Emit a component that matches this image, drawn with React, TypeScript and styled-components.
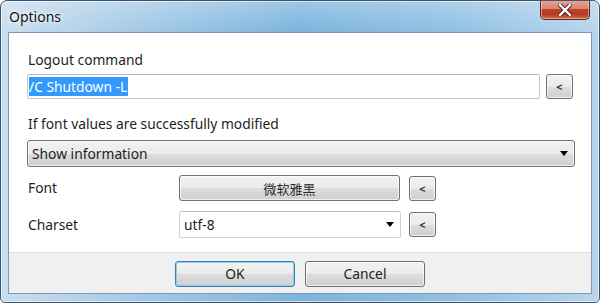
import React from "react";
import styled, { createGlobalStyle } from "styled-components";

const Global = createGlobalStyle`
  html, body { margin: 0; padding: 0; background: #ffffff; }
  #root { width: 600px; height: 303px; }
  * { box-sizing: border-box; }
`;

const Window = styled.div`
  width: 600px;
  height: 303px;
  display: flex;
  flex-direction: column;
  border: 1px solid #3e5570;
  border-radius: 7px 7px 5px 5px;
  background:
    linear-gradient(180deg, rgba(255,255,255,0.25) 0px, rgba(255,255,255,0) 30px),
    linear-gradient(90deg, #c8deef 0%, #a9cce8 20%, #7db4dd 50%, #90c0e3 75%, #b8d5ec 100%);
  box-shadow: inset 0 0 0 1px rgba(255,255,255,0.55);
  font-family: "Noto Sans", "Noto Sans CJK SC", sans-serif;
  color: #1e1e1e;
  overflow: hidden;
`;

const TitleBar = styled.div`
  height: 31px;
  display: flex;
  align-items: flex-start;
  justify-content: space-between;
  padding-left: 8px;
  padding-right: 9px;
`;

const Title = styled.div`
  font-size: 14px;
  line-height: 16px;
  margin-top: 8px;
  color: #111;
  text-shadow: 0 0 6px rgba(255,255,255,0.9), 0 0 3px rgba(255,255,255,0.9);
`;

const CloseButton = styled.div`
  width: 50px;
  height: 20px;
  margin-top: -1px;
  border: 1px solid #5a2a22;
  border-top: none;
  border-radius: 0 0 5px 5px;
  background: linear-gradient(180deg, #e8a899 0%, #d98370 45%, #c2412a 50%, #b83a24 75%, #d56a4f 100%);
  box-shadow: inset 0 0 0 1px rgba(255,255,255,0.4);
  display: flex;
  align-items: center;
  justify-content: center;
`;

const ClientArea = styled.div`
  flex: 1;
  margin: 0 7px 8px 7px;
  border: 1px solid #7f99b4;
  background: #ffffff;
  display: flex;
  flex-direction: column;
`;

const Body = styled.div`
  flex: 1;
  display: flex;
  flex-direction: column;
  padding: 19px 16px 0 18px;
  font-size: 13.8px;
`;

const Label = styled.div<{ $mt?: number }>`
  line-height: 16px;
  padding-left: 1px;
  margin-top: ${(p) => p.$mt ?? 0}px;
`;

const Row = styled.div<{ $mt: number }>`
  display: flex;
  align-items: center;
  margin-top: ${(p) => p.$mt}px;
`;

const RowLabel = styled.div`
  width: 152px;
  padding-left: 1px;
  line-height: 16px;
`;

const TextBox = styled.div<{ $w: number }>`
  width: ${(p) => p.$w}px;
  height: 25px;
  border: 1px solid #b9c8d6;
  border-top-color: #a7b9cb;
  border-radius: 2px;
  background: #fff;
  display: flex;
  align-items: center;
  padding-left: 1px;
`;

const Selected = styled.span`
  background: #3399ff;
  color: #ffffff;
  line-height: 19px;
  padding: 0 1px 0 0;
`;

const SmallButton = styled.div<{ $ml: number }>`
  width: 27px;
  height: 25px;
  margin-left: ${(p) => p.$ml}px;
  border: 1px solid #707070;
  border-radius: 3px;
  background: linear-gradient(180deg, #f2f2f2 0%, #ebebeb 50%, #dddddd 51%, #cfcfcf 100%);
  box-shadow: inset 0 0 0 1px rgba(255,255,255,0.7);
  display: flex;
  align-items: center;
  justify-content: center;
  font-size: 11px;
  font-weight: bold;
  color: #333;
`;

const DropList = styled.div`
  height: 27px;
  margin-top: 8px;
  border: 1px solid #707070;
  border-radius: 3px;
  background: linear-gradient(180deg, #f2f2f2 0%, #ebebeb 50%, #dddddd 51%, #cfcfcf 100%);
  box-shadow: inset 0 0 0 1px rgba(255,255,255,0.7);
  display: flex;
  align-items: center;
  justify-content: space-between;
  padding: 0 6px 0 4px;
`;

const Arrow = styled.span`
  width: 0;
  height: 0;
  border-left: 4px solid transparent;
  border-right: 4px solid transparent;
  border-top: 5px solid #000;
`;

const FontButton = styled.div`
  width: 221px;
  height: 26px;
  border: 1px solid #707070;
  border-radius: 3px;
  background: linear-gradient(180deg, #f2f2f2 0%, #ebebeb 50%, #dddddd 51%, #cfcfcf 100%);
  box-shadow: inset 0 0 0 1px rgba(255,255,255,0.7);
  display: flex;
  align-items: center;
  justify-content: center;
  font-size: 13px;
  color: #2a2a2a;
`;

const Combo = styled.div`
  width: 222px;
  height: 27px;
  border: 1px solid #c9d3dc;
  border-top-color: #b5c0cb;
  border-radius: 2px;
  background: #fff;
  display: flex;
  align-items: center;
  justify-content: space-between;
  padding: 0 6px 0 4px;
`;

const Footer = styled.div`
  height: 41px;
  background: #f0f0f0;
  border-top: 1px solid #dfdfdf;
  display: flex;
  align-items: center;
  justify-content: center;
  gap: 10px;
  padding-top: 1px;
`;

const DialogButton = styled.div<{ $default?: boolean }>`
  width: 120px;
  height: 26px;
  border: 1px solid ${(p) => (p.$default ? "#3c7fb1" : "#707070")};
  border-radius: 3px;
  background: linear-gradient(180deg, #f2f2f2 0%, #ebebeb 50%, #dddddd 51%, #cfcfcf 100%);
  box-shadow: inset 0 0 0 1px ${(p) => (p.$default ? "rgba(120,200,240,0.8)" : "rgba(255,255,255,0.7)")};
  display: flex;
  align-items: center;
  justify-content: center;
  font-size: 13.8px;
`;

export default function App() {
  return (
    <>
      <Global />
      <Window>
        <TitleBar>
          <Title>Options</Title>
          <CloseButton>
            <svg width="14" height="12" viewBox="0 0 14 12">
              <path
                d="M2 1 L12 11 M12 1 L2 11"
                stroke="#4a1d14"
                strokeWidth="4.2"
                strokeLinecap="square"
              />
              <path
                d="M2 1 L12 11 M12 1 L2 11"
                stroke="#ffffff"
                strokeWidth="2.4"
                strokeLinecap="square"
              />
            </svg>
          </CloseButton>
        </TitleBar>
        <ClientArea>
          <Body>
            <Label>Logout command</Label>
            <Row $mt={6}>
              <TextBox $w={513}>
                <Selected>/C Shutdown -L</Selected>
              </TextBox>
              <SmallButton $ml={6}>&lt;</SmallButton>
            </Row>
            <Label $mt={17}>If font values are successfully modified</Label>
            <DropList>
              <span>Show information</span>
              <Arrow />
            </DropList>
            <Row $mt={8}>
              <RowLabel>Font</RowLabel>
              <FontButton>微软雅黑</FontButton>
              <SmallButton $ml={9}>&lt;</SmallButton>
            </Row>
            <Row $mt={10}>
              <RowLabel>Charset</RowLabel>
              <Combo>
                <span>utf-8</span>
                <Arrow />
              </Combo>
              <SmallButton $ml={8}>&lt;</SmallButton>
            </Row>
          </Body>
          <Footer>
            <DialogButton $default>OK</DialogButton>
            <DialogButton>Cancel</DialogButton>
          </Footer>
        </ClientArea>
      </Window>
    </>
  );
}
